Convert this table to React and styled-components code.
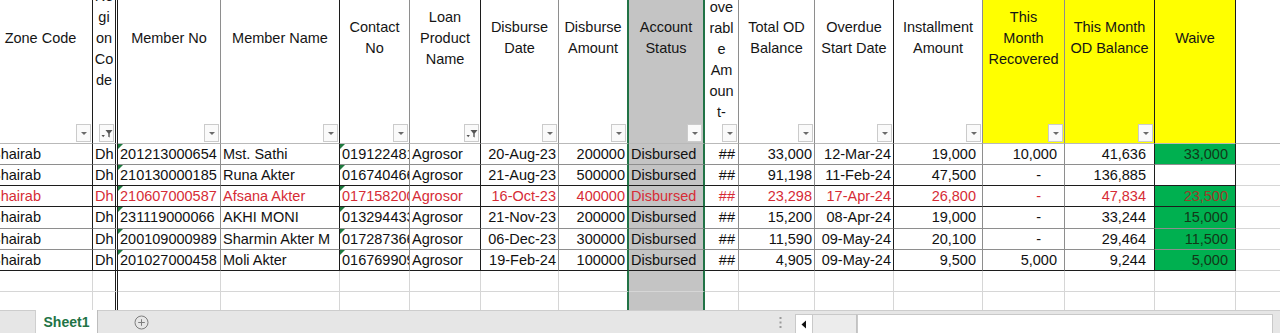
import React from "react";
import styled, { createGlobalStyle } from "styled-components";

const GlobalStyle = createGlobalStyle`
  html, body {
    margin: 0;
    padding: 0;
    background: #fff;
    overflow: hidden;
  }
  body {
    font-family: "Liberation Sans", Arial, sans-serif;
    color: #111;
  }
`;

const DARK = "#1c1c1c";
const SOFT = "#8e8e8e";
const GRID = "#d6d6d6";
const SELECT = "#217346";
const RED = "#d62c36";
const STATUS_GREY = "#c4c4c4";
const YELLOW = "#ffff00";
const WAIVE_GREEN = "#00b050";

const Sheet = styled.div`
  width: 1280px;
  height: 333px;
  display: flex;
  flex-direction: column;
  overflow: hidden;
`;

const GridArea = styled.div`
  height: 310px;
  overflow: hidden;
  background: #fff;
`;

const Table = styled.div`
  display: flex;
  flex-direction: column;
  margin-left: -11px;
  width: max-content;
`;

const Row = styled.div`
  display: flex;
  height: ${(p) => p.$h}px;
  flex: none;
`;

const HeadCell = styled.div`
  position: relative;
  box-sizing: border-box;
  width: ${(p) => p.$w}px;
  flex: none;
  height: 100%;
  overflow: hidden;
  background: ${(p) => p.$bg || "#fff"};
  border-right: ${(p) => (p.$freeze ? `3px double ${DARK}` : `${p.$thick ? 2 : 1}px solid ${p.$edge}`)};
  border-bottom: 1px solid #b9b9b9;
`;

const HeadLabel = styled.div`
  margin-top: ${(p) => p.$top}px;
  font-size: 14.5px;
  line-height: 21px;
  text-align: center;
  white-space: nowrap;
  color: #151515;
`;

const FilterButton = styled.div`
  position: absolute;
  right: 1px;
  bottom: 1px;
  width: 15px;
  height: 18px;
  box-sizing: border-box;
  border: 1px solid #cbcbcb;
  background: #fafafa;
  display: flex;
  align-items: center;
  justify-content: center;
`;

const DropArrow = styled.span`
  width: 0;
  height: 0;
  border-left: 3px solid transparent;
  border-right: 3px solid transparent;
  border-top: 3px solid #6a6a6a;
  margin-top: 1px;
`;

const Cell = styled.div`
  position: relative;
  box-sizing: border-box;
  width: ${(p) => p.$w}px;
  flex: none;
  height: 100%;
  overflow: hidden;
  white-space: nowrap;
  font-size: 14.5px;
  line-height: ${(p) => p.$h}px;
  padding: 0 ${(p) => p.$pad}px 0 2px;
  text-align: ${(p) => p.$align};
  color: ${(p) => p.$color};
  background: ${(p) => p.$bg || "transparent"};
  border-right: ${(p) => (p.$freeze ? `3px double ${DARK}` : `${p.$thick ? 2 : 1}px solid ${p.$edge}`)};
  border-bottom: 1px solid ${(p) => p.$bottom};

  ${(p) =>
    p.$flag &&
    `&::before {
      content: "";
      position: absolute;
      top: 0;
      left: 0;
      border-top: 5px solid #1f7a3f;
      border-right: 5px solid transparent;
    }`}
`;

const TabBar = styled.div`
  height: 23px;
  flex: none;
  display: flex;
  align-items: stretch;
  background: #e6e6e6;
  border-top: 1px solid #cdcdcd;
  box-sizing: border-box;
`;

const TabLead = styled.div`
  width: 35px;
  flex: none;
`;

const SheetTab = styled.div`
  width: 63px;
  flex: none;
  box-sizing: border-box;
  margin-top: -1px;
  background: #fff;
  border-left: 1px solid #cfcfcf;
  border-right: 1px solid #bdbdbd;
  color: #217346;
  font-weight: bold;
  font-size: 14px;
  display: flex;
  align-items: center;
  justify-content: center;
`;

const AddSheet = styled.div`
  margin-left: 36px;
  width: 15px;
  display: flex;
  align-items: center;
`;

const Grip = styled.div`
  margin-left: auto;
  width: 6px;
  display: flex;
  align-items: center;
  justify-content: center;
`;

const ScrollButton = styled.div`
  margin-left: 12px;
  margin-top: 3px;
  width: 18px;
  box-sizing: border-box;
  background: #fff;
  border: 1px solid #c9c9c9;
  border-bottom: none;
  display: flex;
  align-items: center;
  justify-content: center;
`;

const ScrollThumb = styled.div`
  margin-top: 3px;
  width: 44px;
  box-sizing: border-box;
  background: #ececec;
  border-top: 1px solid #c9c9c9;
  border-right: 1px solid #c2c2c2;
`;

const ScrollTrack = styled.div`
  margin-top: 3px;
  width: 416px;
  box-sizing: border-box;
  background: #fff;
  border: 1px solid #c9c9c9;
  border-bottom: none;
`;

const TabTail = styled.div`
  width: 7px;
`;

const columns = [
  { w: 104, lines: ["Zone Code"], filter: "arrow", edge: DARK },
  { w: 25, lines: ["Re", "gi", "on", "Co", "de"], filter: "funnel", edge: DARK, freeze: true },
  { w: 103, lines: ["Member No"], filter: "arrow", edge: SOFT, flag: true },
  { w: 119, lines: ["Member Name"], filter: "arrow", edge: DARK },
  { w: 70, lines: ["Contact", "No"], filter: "arrow", edge: SOFT, flag: true },
  { w: 71, lines: ["Loan", "Product", "Name"], filter: "funnel", edge: DARK },
  { w: 78, lines: ["Disburse", "Date"], filter: "arrow", edge: SOFT, align: "right" },
  { w: 70, lines: ["Disburse", "Amount"], filter: "arrow", edge: SELECT, thick: true, align: "right" },
  { w: 76, lines: ["Account", "Status"], filter: "arrow", edge: SELECT, thick: true, fill: STATUS_GREY },
  { w: 34, lines: ["Rec", "ove", "rabl", "e", "Am", "oun", "t-"], mid: 49, filter: "arrow", edge: SOFT, align: "right", pad: 3 },
  { w: 76, lines: ["Total OD", "Balance"], filter: "arrow", edge: SOFT, align: "right" },
  { w: 79, lines: ["Overdue", "Start Date"], filter: "arrow", edge: DARK, align: "right" },
  { w: 89, lines: ["Installment", "Amount"], filter: "arrow", edge: SOFT, align: "right", pad: 6 },
  { w: 82, lines: ["This", "Month", "Recovered"], filter: "arrow", edge: SOFT, align: "right", pad: 7, head: YELLOW },
  { w: 90, lines: ["This Month", "OD Balance"], filter: "arrow", edge: DARK, align: "right", pad: 8, head: YELLOW },
  { w: 81, lines: ["Waive"], edge: DARK, align: "right", pad: 7, head: YELLOW },
  { w: 80, lines: [], edge: "transparent", blank: true },
];

const records = [
  {
    h: 21,
    edge: SOFT,
    cells: ["Bhairab", "Dh", "201213000654", "Mst. Sathi", "01912248150", "Agrosor", "20-Aug-23", "200000", "Disbursed", "##", "33,000", "12-Mar-24", "19,000", "10,000", "41,636", "33,000"],
  },
  {
    h: 21,
    edge: DARK,
    cells: ["Bhairab", "Dh", "210130000185", "Runa Akter", "01674046612", "Agrosor", "21-Aug-23", "500000", "Disbursed", "##", "91,198", "11-Feb-24", "47,500", "-", "136,885", ""],
  },
  {
    h: 21,
    edge: DARK,
    red: true,
    cells: ["Bhairab", "Dh", "210607000587", "Afsana Akter", "01715820093", "Agrosor", "16-Oct-23", "400000", "Disbursed", "##", "23,298", "17-Apr-24", "26,800", "-", "47,834", "23,500"],
  },
  {
    h: 22,
    edge: SOFT,
    cells: ["Bhairab", "Dh", "231119000066", "AKHI MONI", "01329443312", "Agrosor", "21-Nov-23", "200000", "Disbursed", "##", "15,200", "08-Apr-24", "19,000", "-", "33,244", "15,000"],
  },
  {
    h: 21,
    edge: SOFT,
    cells: ["Bhairab", "Dh", "200109000989", "Sharmin Akter M", "01728736645", "Agrosor", "06-Dec-23", "300000", "Disbursed", "##", "11,590", "09-May-24", "20,100", "-", "29,464", "11,500"],
  },
  {
    h: 21,
    edge: DARK,
    cells: ["Bhairab", "Dh", "201027000458", "Moli Akter", "01676990912", "Agrosor", "19-Feb-24", "100000", "Disbursed", "##", "4,905", "09-May-24", "9,500", "5,000", "9,244", "5,000"],
  },
];

const WAIVE = 15;

const Funnel = () => (
  <svg width="12" height="11" viewBox="0 0 12 11">
    <path d="M4.5 2h7L8.7 5.4V9.5L7.3 8.7V5.4z" fill="#555" />
    <path d="M0.5 7h3.4L2.2 9.2z" fill="#555" />
  </svg>
);

const HeaderRow = () => (
  <Row $h={144}>
    {columns.map((c, i) => {
      const mid = c.mid ?? 38;
      return (
        <HeadCell
          key={i}
          $w={c.w}
          $edge={c.edge}
          $thick={c.thick}
          $freeze={c.freeze}
          $bg={c.head || c.fill}
        >
          <HeadLabel $top={mid - c.lines.length * 10.5}>
            {c.lines.map((l, j) => (
              <div key={j}>{l}</div>
            ))}
          </HeadLabel>
          {c.filter && (
            <FilterButton>
              {c.filter === "funnel" ? <Funnel /> : <DropArrow />}
            </FilterButton>
          )}
        </HeadCell>
      );
    })}
  </Row>
);

const DataRow = ({ rec }) => (
  <Row $h={rec.h}>
    {columns.map((c, i) => {
      const value = rec.cells[i] ?? "";
      const waived = i === WAIVE && value !== "";
      let color = rec.red ? RED : "#111";
      if (waived) color = rec.red ? "#9c3b2a" : "#123818";
      const pad = value === "-" ? 23 : c.pad ?? 2;
      return (
        <Cell
          key={i}
          $w={c.w}
          $h={rec.h - 1}
          $edge={c.edge}
          $thick={c.thick}
          $freeze={c.freeze}
          $bottom={c.blank ? GRID : rec.edge}
          $align={c.align || "left"}
          $pad={pad}
          $color={color}
          $bg={waived ? WAIVE_GREEN : c.fill}
          $flag={c.flag}
        >
          {value}
        </Cell>
      );
    })}
  </Row>
);

const EmptyRow = ({ h }) => (
  <Row $h={h}>
    {columns.map((c, i) => (
      <Cell
        key={i}
        $w={c.w}
        $h={h - 1}
        $edge={c.edge === SELECT ? SELECT : GRID}
        $thick={c.thick}
        $freeze={c.freeze}
        $bottom={GRID}
        $align="left"
        $pad={2}
        $color="#111"
        $bg={c.fill}
      />
    ))}
  </Row>
);

const Tabs = () => (
  <TabBar>
    <TabLead />
    <SheetTab>Sheet1</SheetTab>
    <AddSheet>
      <svg width="15" height="15" viewBox="0 0 15 15">
        <circle cx="7.5" cy="7.5" r="6.5" fill="none" stroke="#7d7d7d" strokeWidth="1" />
        <path d="M7.5 4.2v6.6M4.2 7.5h6.6" stroke="#7d7d7d" strokeWidth="1" />
      </svg>
    </AddSheet>
    <Grip>
      <svg width="3" height="13" viewBox="0 0 3 13">
        <rect x="0.5" y="1" width="2" height="2" fill="#9a9a9a" />
        <rect x="0.5" y="5.5" width="2" height="2" fill="#9a9a9a" />
        <rect x="0.5" y="10" width="2" height="2" fill="#9a9a9a" />
      </svg>
    </Grip>
    <ScrollButton>
      <svg width="6" height="9" viewBox="0 0 6 9">
        <path d="M5 0.5v8L0.5 4.5z" fill="#111" />
      </svg>
    </ScrollButton>
    <ScrollThumb />
    <ScrollTrack />
    <TabTail />
  </TabBar>
);

const App = () => (
  <>
    <GlobalStyle />
    <Sheet>
      <GridArea>
        <Table>
          <HeaderRow />
          {records.map((rec, i) => (
            <DataRow key={i} rec={rec} />
          ))}
          <EmptyRow h={21} />
          <EmptyRow h={21} />
        </Table>
      </GridArea>
      <Tabs />
    </Sheet>
  </>
);

export default App;
